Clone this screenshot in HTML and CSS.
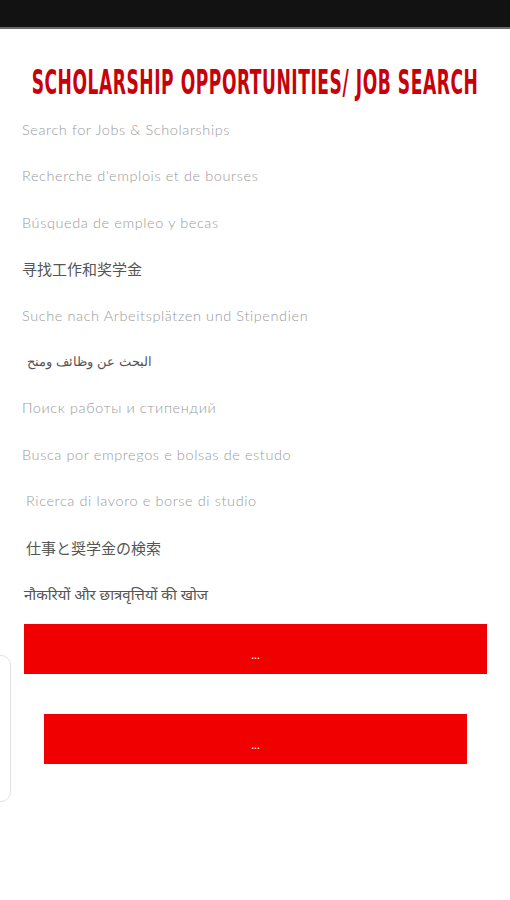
FILE: index.html
```html
<!DOCTYPE html>
<html>
<head>
<meta charset="utf-8">
<link rel="stylesheet" href="styles.css">
</head>
<body>
<div class="statusbar"></div>
<main class="page">
  <h1 class="title"><span>SCHOLARSHIP OPPORTUNITIES/ JOB SEARCH</span></h1>
  <ul class="langs">
    <li>Search for Jobs &amp; Scholarships</li>
    <li>Recherche d'emplois et de bourses</li>
    <li>Búsqueda de empleo y becas</li>
    <li class="cjk">寻找工作和奖学金</li>
    <li>Suche nach Arbeitsplätzen und Stipendien</li>
    <li class="ar" dir="rtl">البحث عن وظائف ومنح</li>
    <li>Поиск работы и стипендий</li>
    <li>Busca por empregos e bolsas de estudo</li>
    <li class="it">Ricerca di lavoro e borse di studio</li>
    <li class="jp">仕事と奨学金の検索</li>
    <li class="hi">नौकरियों और छात्रवृत्तियों की खोज</li>
  </ul>
  <div class="buttons">
    <a class="btn btn-wide">...</a>
    <a class="btn btn-narrow">...</a>
  </div>
</main>
<div class="sidetab"></div>
</body>
</html>
```
FILE: styles.css
```css
html, body {
  margin: 0;
  padding: 0;
  background: #fff;
}
body {
  width: 510px;
  height: 900px;
  overflow: hidden;
  position: relative;
  font-family: Lato, "Open Sans", sans-serif;
}
.statusbar {
  height: 27px;
  background: #121212;
  border-bottom: 2px solid #6a6a6a;
}
.title {
  margin: 39px 0 0 0;
  height: 28px;
  text-align: center;
  font-family: "DejaVu Sans Condensed", sans-serif;
  font-weight: 700;
  font-size: 19px;
  line-height: 28px;
  color: #c8000a;
  letter-spacing: 0.55px;
}
.title span {
  display: inline-block;
  transform: scaleY(1.75);
  transform-origin: center;
}
.langs {
  list-style: none;
  margin: 24px 0 0 0;
  padding: 0 0 0 22px;
  display: flex;
  flex-direction: column;
}
.langs li {
  height: 46.4px;
  line-height: 20px;
  font-size: 14.5px;
  font-weight: 300;
  letter-spacing: 0.6px;
  color: #9a9a9a;
  white-space: nowrap;
}
.langs li.cjk {
  font-family: "Noto Sans CJK SC", sans-serif;
  font-weight: 400;
  font-size: 15px;
  letter-spacing: 0;
  color: #555;
}
.langs li.jp {
  font-family: "Noto Sans CJK JP", sans-serif;
  font-weight: 400;
  font-size: 15px;
  letter-spacing: 0;
  color: #555;
  padding-left: 4px;
}
.langs li.ar {
  font-family: "DejaVu Sans", sans-serif;
  font-size: 13px;
  letter-spacing: 0;
  color: #555;
  direction: rtl;
  width: max-content;
  padding-left: 5px;
}
.langs li.it {
  padding-left: 4px;
}
.langs li.hi {
  font-family: "Noto Sans", "Lohit Devanagari", sans-serif;
  font-weight: 400;
  font-size: 15px;
  letter-spacing: 0;
  color: #555;
  padding-left: 2px;
}
.buttons {
  display: flex;
  flex-direction: column;
  align-items: flex-start;
  gap: 40px;
  margin-top: -6px;
}
.btn {
  display: block;
  height: 50px;
  background: #f00000;
  color: #fff;
  text-align: center;
  font-size: 12px;
  line-height: 62px;
}
.btn-wide {
  width: 463px;
  margin-left: 24px;
}
.btn-narrow {
  width: 423px;
  margin-left: 44px;
}
.sidetab {
  position: absolute;
  left: -20px;
  top: 655px;
  width: 29px;
  height: 145px;
  border: 1px solid #e2e2e2;
  border-radius: 10px;
}
```
